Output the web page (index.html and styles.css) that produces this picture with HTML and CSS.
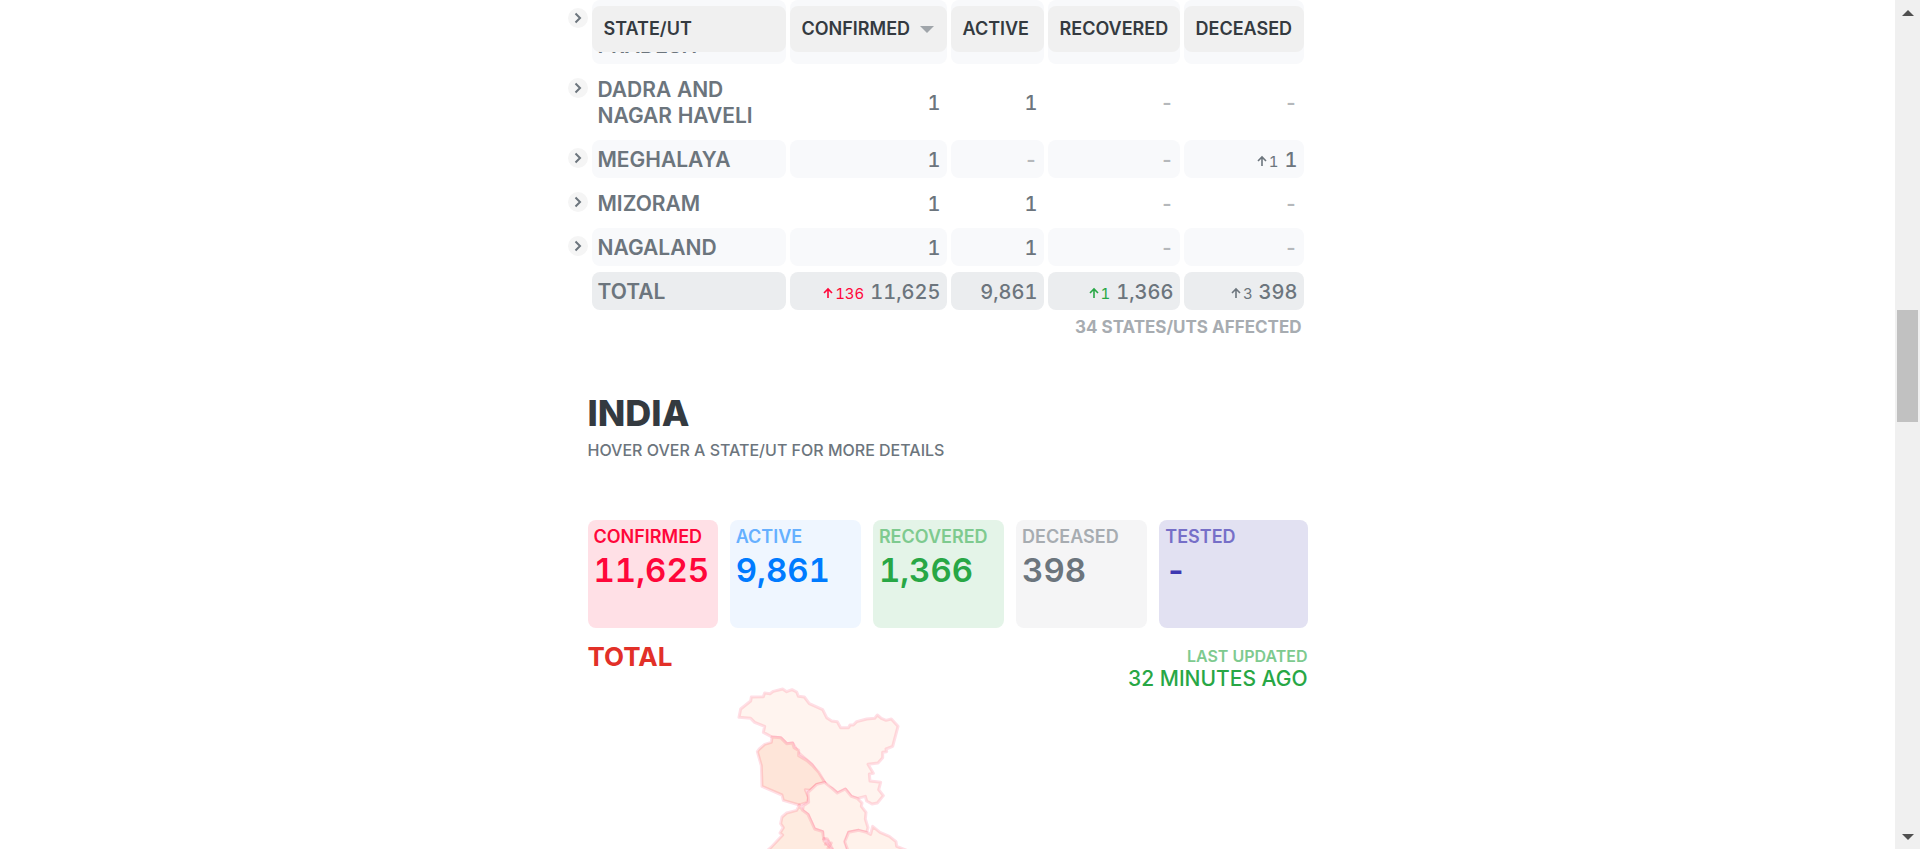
FILE: index.html
```html
<!DOCTYPE html>
<html lang="en">
<head>
<meta charset="utf-8">
<title>India COVID-19 tracker</title>
<link rel="stylesheet" href="styles.css">
</head>
<body>
<svg class="defs" aria-hidden="true">
  <symbol id="chevron" viewBox="0 0 20 20"><path d="M7.500 5.500 12 10l-4.500 4.500" fill="none" stroke="currentColor" stroke-width="2"/></symbol>
  <symbol id="up" viewBox="0 0 10 12"><path d="M5 11V2M1 6l4-4 4 4" fill="none" stroke="currentColor" stroke-width="1.600"/></symbol>
</svg>
<div class="frame">
  <main class="page">
    <div class="content">
      <table class="states">
        <colgroup><col class="c-state"><col class="c-confirmed"><col class="c-active"><col class="c-recovered"><col class="c-deceased"></colgroup>
        <thead>
          <tr>
            <th scope="col">STATE/UT</th>
            <th scope="col">CONFIRMED<span class="sort"></span></th>
            <th scope="col">ACTIVE</th>
            <th scope="col">RECOVERED</th>
            <th scope="col">DECEASED</th>
          </tr>
        </thead>
        <tbody>
          <tr class="shade"><td><button class="expand" aria-label="Expand Arunachal Pradesh"><svg><use href="#chevron"/></svg></button>ARUNACHAL PRADESH</td><td></td><td></td><td></td><td></td></tr>
          <tr><td><button class="expand" aria-label="Expand Dadra and Nagar Haveli"><svg><use href="#chevron"/></svg></button>DADRA AND NAGAR HAVELI</td><td>1</td><td>1</td><td class="none">-</td><td class="none">-</td></tr>
          <tr class="shade"><td><button class="expand" aria-label="Expand Meghalaya"><svg><use href="#chevron"/></svg></button>MEGHALAYA</td><td>1</td><td class="none">-</td><td class="none">-</td><td><span class="delta"><svg><use href="#up"/></svg>1</span>1</td></tr>
          <tr><td><button class="expand" aria-label="Expand Mizoram"><svg><use href="#chevron"/></svg></button>MIZORAM</td><td>1</td><td>1</td><td class="none">-</td><td class="none">-</td></tr>
          <tr class="shade"><td><button class="expand" aria-label="Expand Nagaland"><svg><use href="#chevron"/></svg></button>NAGALAND</td><td>1</td><td>1</td><td class="none">-</td><td class="none">-</td></tr>
          <tr class="total"><td>TOTAL</td><td><span class="delta red"><svg><use href="#up"/></svg>136</span>11,625</td><td>9,861</td><td><span class="delta green"><svg><use href="#up"/></svg>1</span>1,366</td><td><span class="delta"><svg><use href="#up"/></svg>3</span>398</td></tr>
        </tbody>
      </table>
      <p class="affected">34 STATES/UTS AFFECTED</p>

      <section class="explorer">
        <h1>INDIA</h1>
        <p class="hint">HOVER OVER A STATE/UT FOR MORE DETAILS</p>
        <div class="cards">
          <div class="card confirmed"><h2>CONFIRMED</h2><p>11,625</p></div>
          <div class="card active"><h2>ACTIVE</h2><p>9,861</p></div>
          <div class="card recovered"><h2>RECOVERED</h2><p>1,366</p></div>
          <div class="card deceased"><h2>DECEASED</h2><p>398</p></div>
          <div class="card tested"><h2>TESTED</h2><p>-</p></div>
        </div>
        <div class="meta">
          <h2 class="region">TOTAL</h2>
          <div class="updated"><h3>LAST UPDATED</h3><p>32 MINUTES AGO</p></div>
        </div>
        <svg class="map" viewBox="-396 60 2160 600" role="img" aria-label="Map of India">
          <g stroke="#ff073a" stroke-opacity=".13" stroke-width="9" stroke-linejoin="round">
            <path fill="#fff4ef" d="M57 145 62 120 92 96 94 84 130 83 134 72 150 74 160 67 188 60 200 68 216 62 230 69 235 82 253 84 268 104 308 122 320 146 335 156 352 158 362 176 386 176 390 168 400 168 410 158 440 150 464 148 472 138 484 148 498 154 514 150 534 172 518 232 498 240 500 248 488 250 488 266 474 282 444 286 460 313 448 315 450 336 482 340 476 362 490 380 472 402 456 405 440 396 436 382 412 388 394 382 376 360 352 372 336 358 322 352 296 316 276 286 236 252 218 222 200 224 182 206 156 204 130 190 134 172 104 160 92 148Z"/>
            <path fill="#fee5d9" d="M156 204 182 206 200 224 218 222 222 236 236 244 236 260 260 274 276 288 296 310 314 340 290 346 270 364 256 362 266 386 262 400 238 408 190 394 186 378 126 352 124 290 112 248 118 240 134 226 154 220Z"/>
            <path fill="#fff2eb" d="M314 340 336 358 352 372 376 360 394 382 412 388 426 402 424 412 438 430 436 450 444 476 440 490 416 484 386 490 376 518 384 545 340 545 322 510 308 506 308 488 284 480 264 436 248 424 250 410 266 400 264 370 290 346Z"/>
            <path fill="#feebe0" d="M238 408 248 424 264 436 284 480 308 488 312 516 340 545 350 660 60 660 100 580 152 536 188 498 180 492 190 476 182 464 186 444 200 432 230 424Z"/>
            <path fill="#fff2eb" d="M440 490 452 496 458 472 480 490 508 502 528 518 530 532 570 548 620 660 400 660 384 545 374 518 386 490 416 484Z"/>
            <path fill="none" d="M308 508 324 516 316 526 334 522 322 540"/>
          </g>
        </svg>
      </section>
    </div>
  </main>
  <div class="scrollbar" aria-hidden="true">
    <span class="arrow arrow-up"></span>
    <div class="track"><div class="thumb"></div></div>
    <span class="arrow arrow-down"></span>
  </div>
</div>
</body>
</html>
```
FILE: styles.css
```css
* { box-sizing: border-box; }
body { margin: 0; background: #fff; color: #6c757d; font-family: Inter, "Liberation Sans", sans-serif; }
h1, h2, h3, p { margin: 0; }
.defs { display: none; }
.frame { display: flex; height: 100vh; overflow: hidden; }
.page { flex: 1; overflow: hidden; }
.content { max-width: 720px; margin: 0 auto; }

/* State table, scrolled so that its header is stuck to the top */
.states { width: 100%; margin-top: -58px; table-layout: fixed; border-collapse: separate; border-spacing: 4px 6px; }
.c-state { width: 194px; }
.c-confirmed { width: 157px; }
.c-active { width: 93px; }
.c-recovered { width: 132px; }
.c-deceased { width: 120px; }
.states th { position: sticky; top: 6px; z-index: 2; height: 46px; padding: 0 0 0 12px; border-radius: 8px; background: #f0f0f0; color: #343a40; font-size: 18px; line-height: 20px; font-weight: 600; text-align: left; white-space: nowrap; }
.sort { display: inline-block; margin-left: 10px; vertical-align: 2px; border: 7px solid transparent; border-top-color: #a0a5aa; border-bottom: 0; }
.states td { position: relative; padding: 7px 6px 5px; border-radius: 8px; font-size: 20px; line-height: 26px; font-weight: 500; font-variant-numeric: tabular-nums; text-align: right; vertical-align: middle; white-space: nowrap; }
.states td:first-child { font-size: 21px; font-weight: 600; text-align: left; white-space: normal; }
.states .none { color: #b5b8bb; font-weight: 600; }
.shade td { background: #f8f9fb; }
.total td { background: #ebedef; }
.expand { position: absolute; top: 8px; left: -24px; width: 20px; height: 20px; padding: 0; border: 0; border-radius: 50%; background: #f5f5f5; color: #6c757d; }
.expand svg { display: block; width: 20px; height: 20px; }
.delta { margin-right: 6px; font-size: 15px; line-height: 16px; font-weight: 400; }
.delta svg { width: 10px; height: 12px; margin-right: 2px; }
.red { color: #ff073a; }
.green { color: #28a745; }
.affected { padding-right: 6px; color: #a7acb1; font-size: 17px; line-height: 22px; font-weight: 700; text-align: right; }

.explorer { padding-top: 54px; }
h1 { color: #343a40; font-size: 36px; line-height: 42px; font-weight: 800; }
.hint { margin-top: 4px; font-size: 16px; line-height: 24px; font-weight: 500; }
.cards { display: grid; grid-template-columns: 130fr 131fr 131fr 131fr 148fr; gap: 12px; margin-top: 58px; }
.card { min-width: 0; min-height: 108px; padding: 6px; border-radius: 8px; }
.card h2 { font-size: 18px; line-height: 22px; font-weight: 600; }
.card p { margin-top: 2px; font-size: 33px; line-height: 40px; font-weight: 600; font-variant-numeric: tabular-nums; }
.confirmed { background: #ffe0e6; color: #ff073a; }
.active { background: #eff6ff; color: #007bff; }
.active h2 { color: #66b0ff; }
.recovered { background: #e4f4e8; color: #28a745; }
.recovered h2 { color: #7eca8f; }
.deceased { background: #f5f5f6; color: #6c757d; }
.deceased h2 { color: #a7acb1; }
.tested { background: #e2e1f2; color: #3e37b1; }
.tested h2 { color: #766fc8; }
.meta { display: flex; justify-content: space-between; margin-top: 16px; }
.region { color: #e23028; font-size: 26px; line-height: 26px; font-weight: 700; }
.updated { text-align: right; color: #28a745; }
.updated h3 { color: #7eca8f; font-size: 16px; line-height: 24px; font-weight: 600; }
.updated p { font-size: 21px; line-height: 21px; font-weight: 500; }
.map { display: block; width: 100%; overflow: visible; }

.scrollbar { display: flex; flex: none; flex-direction: column; width: 25px; background: #f0f0f0; }
.arrow { display: flex; justify-content: center; align-items: center; height: 25px; }
.arrow::before { content: ""; border: 6px solid transparent; }
.arrow-up::before { border-top: 0; border-bottom-color: #505050; }
.arrow-down::before { border-bottom: 0; border-top-color: #505050; }
.track { display: grid; flex: 1; grid-template-rows: 285fr 112fr 402fr; padding: 0 2px; }
.thumb { grid-row: 2; background: #c1c1c1; }
```
